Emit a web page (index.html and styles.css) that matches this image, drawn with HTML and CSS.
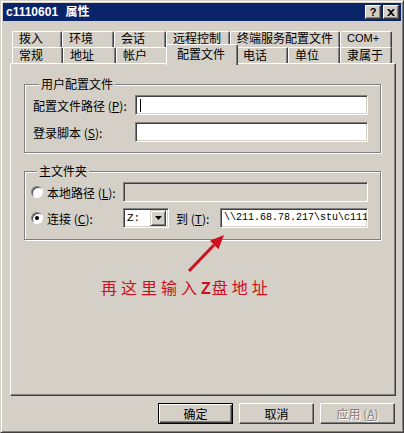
FILE: index.html
```html
<!DOCTYPE html>
<html lang="zh-CN">
<head>
    <meta charset="UTF-8">
    <title>c1110601 属性</title>
    <link rel="stylesheet" href="styles.css">
</head>
<body>
    <div class="window">
        <div class="titlebar">
            <span class="title">c1110601 属性</span>
            <div class="title-btns">
                <span class="tbtn tbtn-help">?</span>
                <span class="tbtn">
                    <svg width="8" height="7" viewBox="0 0 8 7"><path d="M0 0h2l2 2 2-2h2L5 3.5 8 7H6L4 5 2 7H0l3-3.5z" fill="#000"/></svg>
                </span>
            </div>
        </div>

        <div class="main">
            <div class="tabs">
                <div class="tab-row row-back">
                    <div class="tab">拨入</div>
                    <div class="tab">环境</div>
                    <div class="tab">会话</div>
                    <div class="tab">远程控制</div>
                    <div class="tab">终端服务配置文件</div>
                    <div class="tab tab-latin">COM+</div>
                </div>
                <div class="tab-row row-front">
                    <div class="tab">常规</div>
                    <div class="tab">地址</div>
                    <div class="tab">帐户</div>
                    <div class="tab active">配置文件</div>
                    <div class="tab">电话</div>
                    <div class="tab">单位</div>
                    <div class="tab">隶属于</div>
                </div>
            </div>

            <div class="panel">
                <div class="group group-profile">
                    <div class="legend">用户配置文件</div>
                    <div class="fields">
                        <label>配置文件路径 (<u>P</u>):</label>
                        <div class="edit"><span class="caret"></span></div>
                        <label>登录脚本 (<u>S</u>):</label>
                        <div class="edit"></div>
                    </div>
                </div>

                <div class="group group-home">
                    <div class="legend">主文件夹</div>
                    <div class="home-row">
                        <span class="radio"></span>
                        <label>本地路径 (<u>L</u>):</label>
                        <div class="edit disabled"></div>
                    </div>
                    <div class="home-row">
                        <span class="radio checked"></span>
                        <label>连接 (<u>C</u>):</label>
                        <div class="connect">
                            <div class="combo">
                                <span class="combo-value">Z:</span>
                                <span class="combo-btn">
                                    <svg width="7" height="4" viewBox="0 0 7 4"><path d="M0 0h7L3.5 4z" fill="#000"/></svg>
                                </span>
                            </div>
                            <label class="to">到 (<u>T</u>):</label>
                            <div class="edit path">\\211.68.78.217\stu\c111</div>
                        </div>
                    </div>
                </div>

                <p class="hint">再这里输入<b>Z</b>盘地址</p>

                <!-- red annotation arrow pointing at the path box -->
                <svg class="arrow" width="60" height="60" viewBox="0 0 60 60">
                    <line x1="2" y1="40" x2="27" y2="14" stroke="#cc1020" stroke-width="3"/>
                    <path d="M37 4 L31.5 18.2 L22.9 9.8 Z" fill="#cc1020"/>
                </svg>
            </div>

            <div class="actions">
                <button class="btn default">确定</button>
                <button class="btn">取消</button>
                <button class="btn" disabled>应用 (<u>A</u>)</button>
            </div>
        </div>
    </div>
</body>
</html>
```

FILE: styles.css
```css
:root {
    --face: #d4d0c8;
    --light: #ffffff;
    --shadow: #808080;
    --dark: #404040;
    --title: #0a246a;
    --red: #cc1020;
}

* {
    margin: 0;
    padding: 0;
    box-sizing: border-box;
}

body {
    background: var(--face);
    font-family: "Noto Sans CJK SC", "Liberation Sans", sans-serif;
    font-size: 12px;
    color: #000;
}

u {
    text-decoration: underline;
    text-underline-offset: 1px;
}

.window {
    width: 404px;
    height: 433px;
    background: var(--face);
    border-top: 1px solid var(--face);
    border-left: 1px solid var(--face);
    border-right: 1px solid var(--dark);
    border-bottom: 1px solid var(--dark);
    box-shadow: inset 1px 1px 0 var(--light), inset -1px -1px 0 var(--shadow);
    padding: 2px;
}

/* title bar */
.titlebar {
    height: 18px;
    background: var(--title);
    display: flex;
    align-items: center;
    justify-content: space-between;
    padding: 0 2px 0 3px;
}

.title {
    color: #fff;
    font-family: "Liberation Sans", "Noto Sans CJK SC", sans-serif;
    font-weight: bold;
    font-size: 12px;
    line-height: 18px;
    word-spacing: 4px;
}

.title-btns {
    display: flex;
    gap: 2px;
}

.tbtn {
    width: 16px;
    height: 14px;
    background: var(--face);
    border-top: 1px solid var(--light);
    border-left: 1px solid var(--light);
    border-right: 1px solid var(--dark);
    border-bottom: 1px solid var(--dark);
    box-shadow: inset -1px -1px 0 var(--shadow);
    display: flex;
    align-items: center;
    justify-content: center;
}

.tbtn-help {
    font-family: "Liberation Sans", sans-serif;
    font-weight: bold;
    font-size: 11px;
    line-height: 12px;
}

.main {
    padding: 10px 5px 0 7px;
}

/* tabs */
.tabs {
    padding-left: 2px;
}

.tab-row {
    display: grid;
    height: 16px;
    width: 380px;
}

.row-back {
    grid-template-columns: 50px 52px 52px 64px 110px 52px;
}

.row-front {
    grid-template-columns: 51px 53px 52px 68px 52px 52px 52px;
}

.tab {
    height: 17px;
    padding-left: 6px;
    line-height: 14px;
    background: var(--face);
    border-top: 1px solid var(--light);
    border-left: 1px solid var(--light);
    border-right: 1px solid var(--dark);
    border-radius: 2px 2px 0 0;
    box-shadow: inset -1px 0 0 var(--shadow);
    white-space: nowrap;
}

.row-back .tab {
    line-height: 12px;
}

.tab-latin {
    font-family: "Liberation Sans", sans-serif;
    font-size: 11px;
}

.tab.active {
    height: 21px;
    margin: -3px -2px 0;
    padding-left: 10px;
    line-height: 18px;
    position: relative;
    z-index: 1;
}

/* property page */
.panel {
    position: relative;
    height: 333px;
    border-top: 1px solid var(--light);
    border-left: 1px solid var(--light);
    border-right: 1px solid var(--dark);
    border-bottom: 1px solid var(--dark);
    box-shadow: inset -1px -1px 0 var(--shadow);
    padding: 20px 14px 0 13px;
}

.group {
    border: 1px solid var(--shadow);
    box-shadow: inset 1px 1px 0 var(--light), 1px 1px 0 var(--light);
}

.legend {
    display: table;
    margin: -8px 0 0 6px;
    padding: 0 2px;
    background: var(--face);
    line-height: 14px;
}

.group-profile {
    padding: 0 12px 10px 8px;
}

.fields {
    display: grid;
    grid-template-columns: 102px 233px;
    row-gap: 7px;
    align-items: center;
    margin-top: 4px;
}

.edit {
    height: 20px;
    background: #fff;
    border-top: 1px solid var(--shadow);
    border-left: 1px solid var(--shadow);
    border-right: 1px solid var(--light);
    border-bottom: 1px solid var(--light);
    box-shadow: inset 1px 1px 0 var(--dark), inset -1px -1px 0 var(--face);
    padding: 3px 3px 0;
    overflow: hidden;
    white-space: nowrap;
}

.edit.disabled {
    background: var(--face);
}

.caret {
    display: block;
    width: 1px;
    height: 13px;
    margin-left: 1px;
    background: #000;
}

.group-home {
    margin-top: 18px;
    padding: 0 12px 11px 6px;
}

.home-row {
    display: grid;
    grid-template-columns: 16px 76px 245px;
    align-items: center;
    margin-top: 4px;
}

.home-row + .home-row {
    margin-top: 6px;
}

.radio {
    width: 12px;
    height: 12px;
    border-radius: 50%;
    background: #fff;
    border: 1px solid;
    border-color: var(--shadow) var(--light) var(--light) var(--shadow);
    box-shadow: inset 1px 1px 0 var(--dark);
    position: relative;
}

.radio.checked::after {
    content: "";
    position: absolute;
    left: 3px;
    top: 3px;
    width: 4px;
    height: 4px;
    border-radius: 50%;
    background: #000;
}

.connect {
    display: flex;
    align-items: center;
}

.combo {
    width: 46px;
    height: 20px;
    background: #fff;
    border-top: 1px solid var(--shadow);
    border-left: 1px solid var(--shadow);
    border-right: 1px solid var(--light);
    border-bottom: 1px solid var(--light);
    box-shadow: inset 1px 1px 0 var(--dark), inset -1px -1px 0 var(--face);
    display: flex;
    justify-content: space-between;
    padding: 2px 2px 2px 3px;
}

.combo-value {
    font-family: "Liberation Mono", monospace;
    font-size: 11px;
    line-height: 15px;
}

.combo-btn {
    width: 16px;
    height: 16px;
    margin-top: -1px;
    background: var(--face);
    border-top: 1px solid var(--face);
    border-left: 1px solid var(--face);
    border-right: 1px solid var(--dark);
    border-bottom: 1px solid var(--dark);
    box-shadow: inset 1px 1px 0 var(--light), inset -1px -1px 0 var(--shadow);
    display: flex;
    align-items: center;
    justify-content: center;
}

.to {
    width: 51px;
    padding-left: 7px;
}

.edit.path {
    width: 148px;
    font-family: "Liberation Mono", monospace;
    font-size: 10px;
    line-height: 14px;
    padding: 2px 1px 0 3px;
}

.hint {
    margin: 38px 0 0 77px;
    color: var(--red);
    font-size: 16px;
    line-height: 18px;
    letter-spacing: 4px;
}

.hint b {
    font-family: "Liberation Sans", sans-serif;
    letter-spacing: 1px;
}

.arrow {
    position: absolute;
    left: 176px;
    top: 167px;
}

/* dialog buttons */
.actions {
    display: flex;
    justify-content: flex-end;
    gap: 6px;
    margin-top: 7px;
    padding-right: 1px;
}

.btn {
    width: 75px;
    height: 21px;
    font-family: inherit;
    font-size: 12px;
    background: var(--face);
    border-top: 1px solid var(--light);
    border-left: 1px solid var(--light);
    border-right: 1px solid var(--dark);
    border-bottom: 1px solid var(--dark);
    box-shadow: inset -1px -1px 0 var(--shadow);
    color: #000;
}

.btn.default {
    border: 1px solid #000;
    box-shadow: inset 1px 1px 0 var(--light), inset -1px -1px 0 var(--dark), inset -2px -2px 0 var(--shadow);
}

.btn:disabled {
    color: var(--shadow);
    text-shadow: 1px 1px 0 var(--light);
}
```
